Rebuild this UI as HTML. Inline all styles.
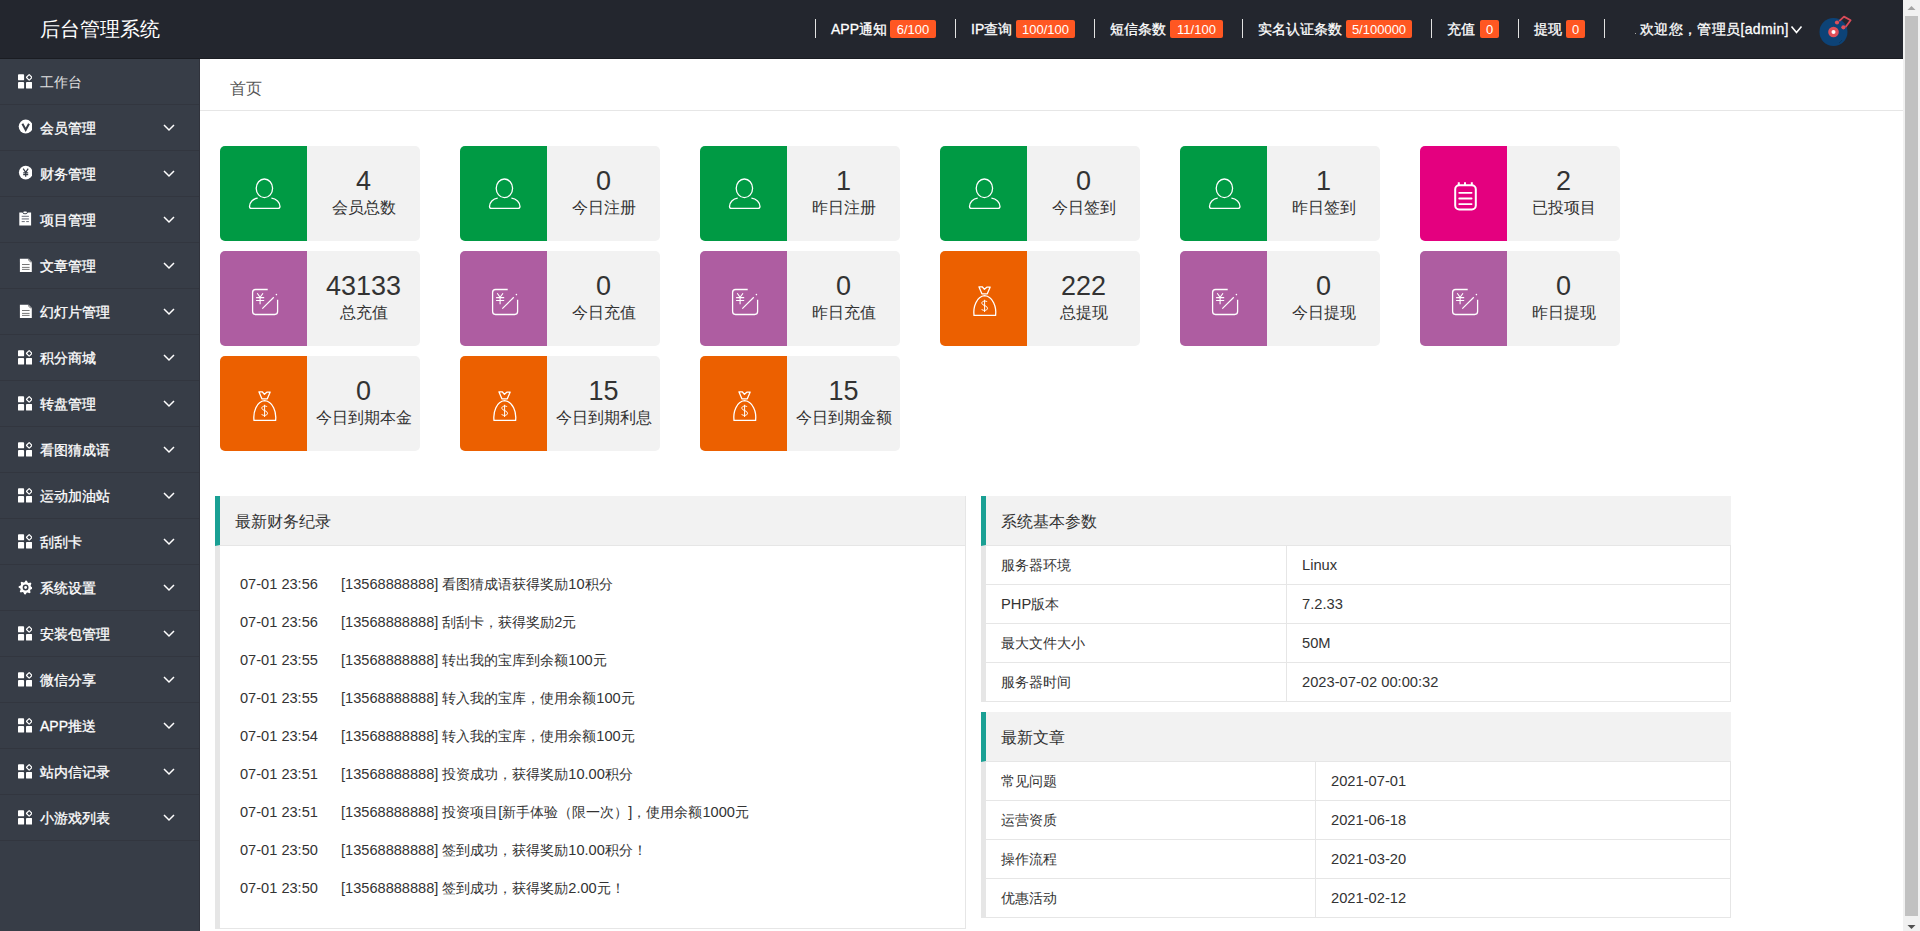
<!DOCTYPE html><html><head><meta charset="utf-8"><title>后台管理系统</title><style>
*{margin:0;padding:0;box-sizing:border-box}
html,body{width:1920px;height:931px;overflow:hidden;background:#fff;font-family:"Liberation Sans",sans-serif;color:#333}
.abs{position:absolute}
#hdr{position:absolute;left:0;top:0;width:1903px;height:59px;background:#23262e;border-bottom:1px solid #1a1c22}
#logo{position:absolute;left:40px;top:15px;font-size:20px;line-height:28px;color:#fff;white-space:nowrap}
.sep{position:absolute;top:19px;width:1px;height:19px;background:#e2e2e2}
.nt{position:absolute;top:19px;font-size:14px;line-height:20px;color:#fff;white-space:nowrap;-webkit-text-stroke:0.3px #fff}
.bd{position:absolute;top:20px;height:18px;line-height:19px;font-size:12px;color:#fff;background:#ff5722;border-radius:2px;text-align:center;white-space:nowrap}
#side{position:absolute;left:0;top:59px;width:200px;height:872px;background:#373d47;border-right:1px solid #30333c}
.it{position:absolute;left:0;width:199px;height:46px;border-bottom:1px solid #32363f}
.tx{position:absolute;left:40px;font-size:14px;line-height:20px;color:#fff;white-space:nowrap;-webkit-text-stroke:0.3px #fff}
.tx0{-webkit-text-stroke:0}
.si{position:absolute;left:16px}
.chev{position:absolute;left:163px}
#crumb{position:absolute;left:200px;top:59px;width:1703px;height:52px;border-bottom:1px solid #e6e6e6}
#crumb span{position:absolute;left:30px;top:19px;font-size:16px;line-height:22px;color:#555}
.card{position:absolute;width:200px;height:95px;background:#f2f2f2;border-radius:5px;overflow:hidden}
.ci{position:absolute;left:0;top:0;width:87px;height:95px}
.cn{position:absolute;left:87px;width:113px;text-align:center;top:18px;font-size:27px;line-height:34px;color:#333}
.cl{position:absolute;left:87px;width:113px;text-align:center;top:51px;font-size:16px;line-height:22px;color:#333;white-space:nowrap}
.q{position:absolute;height:50px;background:#f2f2f2;border-left:5px solid #1aa094;border-bottom:1px solid #e6e6e6}
.q span{position:absolute;left:15px;top:15px;font-size:16px;line-height:22px;color:#333;white-space:nowrap}
.tl{position:absolute;font-size:14px;line-height:20px;color:#333;white-space:nowrap}
.row{position:absolute;border-bottom:1px solid #e6e6e6}
.td{position:absolute;font-size:14px;line-height:20px;color:#333;white-space:nowrap}

.tl .L{font-size:14.6px}
.td .L{font-size:14.7px}
.nt .L{font-size:14px}
.bd{font-size:13px !important}
</style></head><body>
<div id="hdr"><div id="logo">后台管理系统</div>
<div class="sep" style="left:815px"></div><div class="nt" style="left:831px">APP通知</div><div class="bd" style="left:890px;width:46px">6/100</div>
<div class="sep" style="left:955px"></div><div class="nt" style="left:971px">IP查询</div><div class="bd" style="left:1016px;width:59px">100/100</div>
<div class="sep" style="left:1094px"></div><div class="nt" style="left:1110px">短信条数</div><div class="bd" style="left:1170px;width:53px">11/100</div>
<div class="sep" style="left:1242px"></div><div class="nt" style="left:1258px">实名认证条数</div><div class="bd" style="left:1346px;width:66px">5/100000</div>
<div class="sep" style="left:1431px"></div><div class="nt" style="left:1447px">充值</div><div class="bd" style="left:1480px;width:19px">0</div>
<div class="sep" style="left:1518px"></div><div class="nt" style="left:1534px">提现</div><div class="bd" style="left:1566px;width:19px">0</div>
<div class="sep" style="left:1604px"></div>
<div class="abs" style="left:1635px;top:33px;width:1px;height:1px;background:#aaa"></div>
<div class="nt" style="left:1640px;letter-spacing:0.35px">欢迎您，管理员[admin]</div>
<svg class="abs" style="left:1790px;top:25px" width="13" height="10" viewBox="0 0 13 10"><path d="M1.5 1.5 L6.5 7.5 L11.5 1.5" fill="none" stroke="#fff" stroke-width="1.6"/></svg>
<svg class="abs" style="left:1815px;top:12px" width="40" height="40" viewBox="0 0 40 40"><circle cx="18.5" cy="20" r="14" fill="#0d4377"/><circle cx="18.5" cy="20" r="5.3" fill="#e0505a"/><circle cx="18.5" cy="20" r="2" fill="#fff"/><path d="M27 28 A11 11 0 0 1 24 31" fill="none" stroke="#08335c" stroke-width="0.8"/><path d="M24.2 9.2 L29 4.6 L35.6 8.2 L30.6 15" fill="none" stroke="#d94b59" stroke-width="1.8" stroke-linejoin="round"/><circle cx="22" cy="10.5" r="2.1" fill="#e0505a"/><circle cx="28.4" cy="15.3" r="2.1" fill="#e0505a"/></svg>
</div>
<div id="side"></div>
<div class="it" style="top:59px"></div>
<svg class="si" style="top:73px" width="16" height="16" viewBox="0 0 16 16"><rect x="2" y="1.2" width="6.1" height="6.1" rx="0.9" fill="#fff"/><rect x="2" y="9.1" width="6.1" height="6.5" rx="0.9" fill="#fff"/><rect x="10" y="9.1" width="6.3" height="6.5" rx="0.9" fill="#fff"/><rect x="11.2" y="2.4" width="4" height="4" rx="0.5" transform="rotate(45 13.2 4.4)" fill="none" stroke="#fff" stroke-width="1.2"/></svg>
<div class="tx tx0" style="top:72px;color:#e0e0e0">工作台</div>
<div class="it" style="top:105px"></div>
<svg class="si" style="top:119px" width="16" height="16" viewBox="0 0 16 16"><circle cx="9.7" cy="7.6" r="7" fill="#fff"/><path d="M6.4 4.8 L9.7 10.8 L13 4.8" fill="none" stroke="#373d47" stroke-width="2"/></svg>
<div class="tx" style="top:118px;color:#fff">会员管理</div>
<svg class="chev" style="top:124px" width="12" height="8" viewBox="0 0 12 8"><path d="M1 1 L6 6 L11 1" fill="none" stroke="#fff" stroke-width="1.5"/></svg>
<div class="it" style="top:151px"></div>
<svg class="si" style="top:165px" width="16" height="16" viewBox="0 0 16 16"><circle cx="9.7" cy="7.6" r="6.8" fill="#fff"/><path d="M7.2 3.6 L9.7 7.4 L12.2 3.6 M9.7 7.4 V11.8 M7.2 7.8 H12.2 M7.2 9.6 H12.2" fill="none" stroke="#373d47" stroke-width="1.2"/></svg>
<div class="tx" style="top:164px;color:#fff">财务管理</div>
<svg class="chev" style="top:170px" width="12" height="8" viewBox="0 0 12 8"><path d="M1 1 L6 6 L11 1" fill="none" stroke="#fff" stroke-width="1.5"/></svg>
<div class="it" style="top:197px"></div>
<svg class="si" style="top:211px" width="16" height="16" viewBox="0 0 16 16"><path d="M3.3 1.4 H6.4 Q7.2 3.3 9.1 3.3 Q11 3.3 11.8 1.4 H15.1 V14.6 H3.3 Z" fill="#fff"/><rect x="7.3" y="0.6" width="3.6" height="1.6" rx="0.8" fill="#fff"/><path d="M5.7 5.3 H12.9 M10.8 7.9" stroke="#6b6f78" stroke-width="1"/><path d="M5.7 7.9 H12.9" stroke="#9a9da4" stroke-width="1.6"/><path d="M5.7 10.6 H8.8 M10.2 10.6 H12.9" stroke="#6b6f78" stroke-width="1"/></svg>
<div class="tx" style="top:210px;color:#fff">项目管理</div>
<svg class="chev" style="top:216px" width="12" height="8" viewBox="0 0 12 8"><path d="M1 1 L6 6 L11 1" fill="none" stroke="#fff" stroke-width="1.5"/></svg>
<div class="it" style="top:243px"></div>
<svg class="si" style="top:257px" width="16" height="16" viewBox="0 0 16 16"><path d="M3.9 1.7 H12.6 L15.8 5 V15.1 H3.9 Z" fill="#fff"/><path d="M12.3 2.2 Q13 4.6 15.3 5.2" fill="none" stroke="#777" stroke-width="1"/><path d="M6 7.5 H13.6 M6 10.4 H13.6 M6 12.4 H13.6" stroke="#777" stroke-width="1"/></svg>
<div class="tx" style="top:256px;color:#fff">文章管理</div>
<svg class="chev" style="top:262px" width="12" height="8" viewBox="0 0 12 8"><path d="M1 1 L6 6 L11 1" fill="none" stroke="#fff" stroke-width="1.5"/></svg>
<div class="it" style="top:289px"></div>
<svg class="si" style="top:303px" width="16" height="16" viewBox="0 0 16 16"><path d="M3.9 1.7 H12.6 L15.8 5 V15.1 H3.9 Z" fill="#fff"/><path d="M12.3 2.2 Q13 4.6 15.3 5.2" fill="none" stroke="#777" stroke-width="1"/><path d="M6 7.5 H13.6 M6 10.4 H13.6 M6 12.4 H13.6" stroke="#777" stroke-width="1"/></svg>
<div class="tx" style="top:302px;color:#fff">幻灯片管理</div>
<svg class="chev" style="top:308px" width="12" height="8" viewBox="0 0 12 8"><path d="M1 1 L6 6 L11 1" fill="none" stroke="#fff" stroke-width="1.5"/></svg>
<div class="it" style="top:335px"></div>
<svg class="si" style="top:349px" width="16" height="16" viewBox="0 0 16 16"><rect x="2" y="1.2" width="6.1" height="6.1" rx="0.9" fill="#fff"/><rect x="2" y="9.1" width="6.1" height="6.5" rx="0.9" fill="#fff"/><rect x="10" y="9.1" width="6.3" height="6.5" rx="0.9" fill="#fff"/><rect x="11.2" y="2.4" width="4" height="4" rx="0.5" transform="rotate(45 13.2 4.4)" fill="none" stroke="#fff" stroke-width="1.2"/></svg>
<div class="tx" style="top:348px;color:#fff">积分商城</div>
<svg class="chev" style="top:354px" width="12" height="8" viewBox="0 0 12 8"><path d="M1 1 L6 6 L11 1" fill="none" stroke="#fff" stroke-width="1.5"/></svg>
<div class="it" style="top:381px"></div>
<svg class="si" style="top:395px" width="16" height="16" viewBox="0 0 16 16"><rect x="2" y="1.2" width="6.1" height="6.1" rx="0.9" fill="#fff"/><rect x="2" y="9.1" width="6.1" height="6.5" rx="0.9" fill="#fff"/><rect x="10" y="9.1" width="6.3" height="6.5" rx="0.9" fill="#fff"/><rect x="11.2" y="2.4" width="4" height="4" rx="0.5" transform="rotate(45 13.2 4.4)" fill="none" stroke="#fff" stroke-width="1.2"/></svg>
<div class="tx" style="top:394px;color:#fff">转盘管理</div>
<svg class="chev" style="top:400px" width="12" height="8" viewBox="0 0 12 8"><path d="M1 1 L6 6 L11 1" fill="none" stroke="#fff" stroke-width="1.5"/></svg>
<div class="it" style="top:427px"></div>
<svg class="si" style="top:441px" width="16" height="16" viewBox="0 0 16 16"><rect x="2" y="1.2" width="6.1" height="6.1" rx="0.9" fill="#fff"/><rect x="2" y="9.1" width="6.1" height="6.5" rx="0.9" fill="#fff"/><rect x="10" y="9.1" width="6.3" height="6.5" rx="0.9" fill="#fff"/><rect x="11.2" y="2.4" width="4" height="4" rx="0.5" transform="rotate(45 13.2 4.4)" fill="none" stroke="#fff" stroke-width="1.2"/></svg>
<div class="tx" style="top:440px;color:#fff">看图猜成语</div>
<svg class="chev" style="top:446px" width="12" height="8" viewBox="0 0 12 8"><path d="M1 1 L6 6 L11 1" fill="none" stroke="#fff" stroke-width="1.5"/></svg>
<div class="it" style="top:473px"></div>
<svg class="si" style="top:487px" width="16" height="16" viewBox="0 0 16 16"><rect x="2" y="1.2" width="6.1" height="6.1" rx="0.9" fill="#fff"/><rect x="2" y="9.1" width="6.1" height="6.5" rx="0.9" fill="#fff"/><rect x="10" y="9.1" width="6.3" height="6.5" rx="0.9" fill="#fff"/><rect x="11.2" y="2.4" width="4" height="4" rx="0.5" transform="rotate(45 13.2 4.4)" fill="none" stroke="#fff" stroke-width="1.2"/></svg>
<div class="tx" style="top:486px;color:#fff">运动加油站</div>
<svg class="chev" style="top:492px" width="12" height="8" viewBox="0 0 12 8"><path d="M1 1 L6 6 L11 1" fill="none" stroke="#fff" stroke-width="1.5"/></svg>
<div class="it" style="top:519px"></div>
<svg class="si" style="top:533px" width="16" height="16" viewBox="0 0 16 16"><rect x="2" y="1.2" width="6.1" height="6.1" rx="0.9" fill="#fff"/><rect x="2" y="9.1" width="6.1" height="6.5" rx="0.9" fill="#fff"/><rect x="10" y="9.1" width="6.3" height="6.5" rx="0.9" fill="#fff"/><rect x="11.2" y="2.4" width="4" height="4" rx="0.5" transform="rotate(45 13.2 4.4)" fill="none" stroke="#fff" stroke-width="1.2"/></svg>
<div class="tx" style="top:532px;color:#fff">刮刮卡</div>
<svg class="chev" style="top:538px" width="12" height="8" viewBox="0 0 12 8"><path d="M1 1 L6 6 L11 1" fill="none" stroke="#fff" stroke-width="1.5"/></svg>
<div class="it" style="top:565px"></div>
<svg class="si" style="top:579px" width="16" height="16" viewBox="0 0 16 16"><polygon points="8.55,3.20 9.60,1.50 10.97,1.63 11.67,3.51 12.60,4.01 14.55,3.55 15.42,4.61 14.59,6.43 14.90,7.45 16.60,8.50 16.47,9.87 14.59,10.57 14.09,11.50 14.55,13.45 13.49,14.32 11.67,13.49 10.65,13.80 9.60,15.50 8.23,15.37 7.53,13.49 6.60,12.99 4.65,13.45 3.78,12.39 4.61,10.57 4.30,9.55 2.60,8.50 2.73,7.13 4.61,6.43 5.11,5.50 4.65,3.55 5.71,2.68 7.53,3.51" fill="#fff"/><circle cx="9.6" cy="8.5" r="2.2" fill="none" stroke="#373d47" stroke-width="1.5"/></svg>
<div class="tx" style="top:578px;color:#fff">系统设置</div>
<svg class="chev" style="top:584px" width="12" height="8" viewBox="0 0 12 8"><path d="M1 1 L6 6 L11 1" fill="none" stroke="#fff" stroke-width="1.5"/></svg>
<div class="it" style="top:611px"></div>
<svg class="si" style="top:625px" width="16" height="16" viewBox="0 0 16 16"><rect x="2" y="1.2" width="6.1" height="6.1" rx="0.9" fill="#fff"/><rect x="2" y="9.1" width="6.1" height="6.5" rx="0.9" fill="#fff"/><rect x="10" y="9.1" width="6.3" height="6.5" rx="0.9" fill="#fff"/><rect x="11.2" y="2.4" width="4" height="4" rx="0.5" transform="rotate(45 13.2 4.4)" fill="none" stroke="#fff" stroke-width="1.2"/></svg>
<div class="tx" style="top:624px;color:#fff">安装包管理</div>
<svg class="chev" style="top:630px" width="12" height="8" viewBox="0 0 12 8"><path d="M1 1 L6 6 L11 1" fill="none" stroke="#fff" stroke-width="1.5"/></svg>
<div class="it" style="top:657px"></div>
<svg class="si" style="top:671px" width="16" height="16" viewBox="0 0 16 16"><rect x="2" y="1.2" width="6.1" height="6.1" rx="0.9" fill="#fff"/><rect x="2" y="9.1" width="6.1" height="6.5" rx="0.9" fill="#fff"/><rect x="10" y="9.1" width="6.3" height="6.5" rx="0.9" fill="#fff"/><rect x="11.2" y="2.4" width="4" height="4" rx="0.5" transform="rotate(45 13.2 4.4)" fill="none" stroke="#fff" stroke-width="1.2"/></svg>
<div class="tx" style="top:670px;color:#fff">微信分享</div>
<svg class="chev" style="top:676px" width="12" height="8" viewBox="0 0 12 8"><path d="M1 1 L6 6 L11 1" fill="none" stroke="#fff" stroke-width="1.5"/></svg>
<div class="it" style="top:703px"></div>
<svg class="si" style="top:717px" width="16" height="16" viewBox="0 0 16 16"><rect x="2" y="1.2" width="6.1" height="6.1" rx="0.9" fill="#fff"/><rect x="2" y="9.1" width="6.1" height="6.5" rx="0.9" fill="#fff"/><rect x="10" y="9.1" width="6.3" height="6.5" rx="0.9" fill="#fff"/><rect x="11.2" y="2.4" width="4" height="4" rx="0.5" transform="rotate(45 13.2 4.4)" fill="none" stroke="#fff" stroke-width="1.2"/></svg>
<div class="tx" style="top:716px;color:#fff"><span class="L">APP</span>推送</div>
<svg class="chev" style="top:722px" width="12" height="8" viewBox="0 0 12 8"><path d="M1 1 L6 6 L11 1" fill="none" stroke="#fff" stroke-width="1.5"/></svg>
<div class="it" style="top:749px"></div>
<svg class="si" style="top:763px" width="16" height="16" viewBox="0 0 16 16"><rect x="2" y="1.2" width="6.1" height="6.1" rx="0.9" fill="#fff"/><rect x="2" y="9.1" width="6.1" height="6.5" rx="0.9" fill="#fff"/><rect x="10" y="9.1" width="6.3" height="6.5" rx="0.9" fill="#fff"/><rect x="11.2" y="2.4" width="4" height="4" rx="0.5" transform="rotate(45 13.2 4.4)" fill="none" stroke="#fff" stroke-width="1.2"/></svg>
<div class="tx" style="top:762px;color:#fff">站内信记录</div>
<svg class="chev" style="top:768px" width="12" height="8" viewBox="0 0 12 8"><path d="M1 1 L6 6 L11 1" fill="none" stroke="#fff" stroke-width="1.5"/></svg>
<div class="it" style="top:795px"></div>
<svg class="si" style="top:809px" width="16" height="16" viewBox="0 0 16 16"><rect x="2" y="1.2" width="6.1" height="6.1" rx="0.9" fill="#fff"/><rect x="2" y="9.1" width="6.1" height="6.5" rx="0.9" fill="#fff"/><rect x="10" y="9.1" width="6.3" height="6.5" rx="0.9" fill="#fff"/><rect x="11.2" y="2.4" width="4" height="4" rx="0.5" transform="rotate(45 13.2 4.4)" fill="none" stroke="#fff" stroke-width="1.2"/></svg>
<div class="tx" style="top:808px;color:#fff">小游戏列表</div>
<svg class="chev" style="top:814px" width="12" height="8" viewBox="0 0 12 8"><path d="M1 1 L6 6 L11 1" fill="none" stroke="#fff" stroke-width="1.5"/></svg>
<div id="crumb"><span>首页</span></div>
<div class="card" style="left:220px;top:146px"><div class="ci" style="background:#009a44"><svg class="abs" style="left:0;top:0" width="87" height="95" viewBox="0 0 87 95"><ellipse cx="44.4" cy="42.3" rx="8.2" ry="9.3" fill="none" stroke="#fff" stroke-width="1.3"/><path d="M37.7 52.2 C33 52.6 29.5 56.5 29.5 60.5 C29.5 61.8 30.3 62.4 31.5 62.4 H57.8 C59 62.4 60 61.8 60 60.5 C60 56.5 56.3 52.6 51.4 52.2" fill="none" stroke="#fff" stroke-width="1.3"/></svg></div><div class="cn">4</div><div class="cl">会员总数</div></div>
<div class="card" style="left:460px;top:146px"><div class="ci" style="background:#009a44"><svg class="abs" style="left:0;top:0" width="87" height="95" viewBox="0 0 87 95"><ellipse cx="44.4" cy="42.3" rx="8.2" ry="9.3" fill="none" stroke="#fff" stroke-width="1.3"/><path d="M37.7 52.2 C33 52.6 29.5 56.5 29.5 60.5 C29.5 61.8 30.3 62.4 31.5 62.4 H57.8 C59 62.4 60 61.8 60 60.5 C60 56.5 56.3 52.6 51.4 52.2" fill="none" stroke="#fff" stroke-width="1.3"/></svg></div><div class="cn">0</div><div class="cl">今日注册</div></div>
<div class="card" style="left:700px;top:146px"><div class="ci" style="background:#009a44"><svg class="abs" style="left:0;top:0" width="87" height="95" viewBox="0 0 87 95"><ellipse cx="44.4" cy="42.3" rx="8.2" ry="9.3" fill="none" stroke="#fff" stroke-width="1.3"/><path d="M37.7 52.2 C33 52.6 29.5 56.5 29.5 60.5 C29.5 61.8 30.3 62.4 31.5 62.4 H57.8 C59 62.4 60 61.8 60 60.5 C60 56.5 56.3 52.6 51.4 52.2" fill="none" stroke="#fff" stroke-width="1.3"/></svg></div><div class="cn">1</div><div class="cl">昨日注册</div></div>
<div class="card" style="left:940px;top:146px"><div class="ci" style="background:#009a44"><svg class="abs" style="left:0;top:0" width="87" height="95" viewBox="0 0 87 95"><ellipse cx="44.4" cy="42.3" rx="8.2" ry="9.3" fill="none" stroke="#fff" stroke-width="1.3"/><path d="M37.7 52.2 C33 52.6 29.5 56.5 29.5 60.5 C29.5 61.8 30.3 62.4 31.5 62.4 H57.8 C59 62.4 60 61.8 60 60.5 C60 56.5 56.3 52.6 51.4 52.2" fill="none" stroke="#fff" stroke-width="1.3"/></svg></div><div class="cn">0</div><div class="cl">今日签到</div></div>
<div class="card" style="left:1180px;top:146px"><div class="ci" style="background:#009a44"><svg class="abs" style="left:0;top:0" width="87" height="95" viewBox="0 0 87 95"><ellipse cx="44.4" cy="42.3" rx="8.2" ry="9.3" fill="none" stroke="#fff" stroke-width="1.3"/><path d="M37.7 52.2 C33 52.6 29.5 56.5 29.5 60.5 C29.5 61.8 30.3 62.4 31.5 62.4 H57.8 C59 62.4 60 61.8 60 60.5 C60 56.5 56.3 52.6 51.4 52.2" fill="none" stroke="#fff" stroke-width="1.3"/></svg></div><div class="cn">1</div><div class="cl">昨日签到</div></div>
<div class="card" style="left:1420px;top:146px"><div class="ci" style="background:#e4007f"><svg class="abs" style="left:0;top:0" width="87" height="95" viewBox="0 0 87 95"><rect x="35.2" y="39.2" width="20.6" height="24.3" rx="4" fill="none" stroke="#fff" stroke-width="2"/><path d="M38.8 36.2 V39.5 M45 36.2 V39.5 M51.8 36.2 V39.5" stroke="#fff" stroke-width="2"/><path d="M39.2 46.8 H51.6 M39.2 52.5 H51.6 M39.2 58.1 H51.6" stroke="#fff" stroke-width="1.8" stroke-linecap="round"/></svg></div><div class="cn">2</div><div class="cl">已投项目</div></div>
<div class="card" style="left:220px;top:251px"><div class="ci" style="background:#ae5da1"><svg class="abs" style="left:0;top:0" width="87" height="95" viewBox="0 0 87 95"><path d="M47.7 38.5 H35.5 Q32.6 38.5 32.6 41.4 V60.6 Q32.6 63.5 35.5 63.5 H54.7 Q57.6 63.5 57.6 60.6 V48.7" fill="none" stroke="#fff" stroke-width="1.3"/><path d="M42.3 57.6 L53.8 46.3" fill="none" stroke="#fff" stroke-width="1.2"/><circle cx="56.4" cy="43.6" r="0.8" fill="#fff"/><path d="M37.2 42.3 L40.1 46.3 L43 42.3 M40.1 46.3 V53.3 M36.1 46.6 H44.2 M36.1 49.5 H44.2" fill="none" stroke="#fff" stroke-width="1.1"/></svg></div><div class="cn">43133</div><div class="cl">总充值</div></div>
<div class="card" style="left:460px;top:251px"><div class="ci" style="background:#ae5da1"><svg class="abs" style="left:0;top:0" width="87" height="95" viewBox="0 0 87 95"><path d="M47.7 38.5 H35.5 Q32.6 38.5 32.6 41.4 V60.6 Q32.6 63.5 35.5 63.5 H54.7 Q57.6 63.5 57.6 60.6 V48.7" fill="none" stroke="#fff" stroke-width="1.3"/><path d="M42.3 57.6 L53.8 46.3" fill="none" stroke="#fff" stroke-width="1.2"/><circle cx="56.4" cy="43.6" r="0.8" fill="#fff"/><path d="M37.2 42.3 L40.1 46.3 L43 42.3 M40.1 46.3 V53.3 M36.1 46.6 H44.2 M36.1 49.5 H44.2" fill="none" stroke="#fff" stroke-width="1.1"/></svg></div><div class="cn">0</div><div class="cl">今日充值</div></div>
<div class="card" style="left:700px;top:251px"><div class="ci" style="background:#ae5da1"><svg class="abs" style="left:0;top:0" width="87" height="95" viewBox="0 0 87 95"><path d="M47.7 38.5 H35.5 Q32.6 38.5 32.6 41.4 V60.6 Q32.6 63.5 35.5 63.5 H54.7 Q57.6 63.5 57.6 60.6 V48.7" fill="none" stroke="#fff" stroke-width="1.3"/><path d="M42.3 57.6 L53.8 46.3" fill="none" stroke="#fff" stroke-width="1.2"/><circle cx="56.4" cy="43.6" r="0.8" fill="#fff"/><path d="M37.2 42.3 L40.1 46.3 L43 42.3 M40.1 46.3 V53.3 M36.1 46.6 H44.2 M36.1 49.5 H44.2" fill="none" stroke="#fff" stroke-width="1.1"/></svg></div><div class="cn">0</div><div class="cl">昨日充值</div></div>
<div class="card" style="left:940px;top:251px"><div class="ci" style="background:#ec6000"><svg class="abs" style="left:0;top:0" width="87" height="95" viewBox="0 0 87 95"><path d="M34 64.3 H55.6 C56.6 56 53 45.5 44.6 44.7 C36.5 45.5 33 56 34 64.3 Z" fill="none" stroke="#fff" stroke-width="1.3"/><path d="M38.9 35.8 L41.9 42.8 H47.3 L50.1 36.2 H46.8 L44.4 38.3 L42.2 35.8 Z" fill="none" stroke="#fff" stroke-width="1.3" stroke-linejoin="round"/><path d="M47.3 51 C46.6 49.6 41.7 49.6 41.8 52.2 C41.9 54.8 47.4 54.2 47.5 57.2 C47.6 60 42.3 59.9 41.5 58.1 M44.6 48.8 V61" fill="none" stroke="#fff" stroke-width="1"/></svg></div><div class="cn">222</div><div class="cl">总提现</div></div>
<div class="card" style="left:1180px;top:251px"><div class="ci" style="background:#ae5da1"><svg class="abs" style="left:0;top:0" width="87" height="95" viewBox="0 0 87 95"><path d="M47.7 38.5 H35.5 Q32.6 38.5 32.6 41.4 V60.6 Q32.6 63.5 35.5 63.5 H54.7 Q57.6 63.5 57.6 60.6 V48.7" fill="none" stroke="#fff" stroke-width="1.3"/><path d="M42.3 57.6 L53.8 46.3" fill="none" stroke="#fff" stroke-width="1.2"/><circle cx="56.4" cy="43.6" r="0.8" fill="#fff"/><path d="M37.2 42.3 L40.1 46.3 L43 42.3 M40.1 46.3 V53.3 M36.1 46.6 H44.2 M36.1 49.5 H44.2" fill="none" stroke="#fff" stroke-width="1.1"/></svg></div><div class="cn">0</div><div class="cl">今日提现</div></div>
<div class="card" style="left:1420px;top:251px"><div class="ci" style="background:#ae5da1"><svg class="abs" style="left:0;top:0" width="87" height="95" viewBox="0 0 87 95"><path d="M47.7 38.5 H35.5 Q32.6 38.5 32.6 41.4 V60.6 Q32.6 63.5 35.5 63.5 H54.7 Q57.6 63.5 57.6 60.6 V48.7" fill="none" stroke="#fff" stroke-width="1.3"/><path d="M42.3 57.6 L53.8 46.3" fill="none" stroke="#fff" stroke-width="1.2"/><circle cx="56.4" cy="43.6" r="0.8" fill="#fff"/><path d="M37.2 42.3 L40.1 46.3 L43 42.3 M40.1 46.3 V53.3 M36.1 46.6 H44.2 M36.1 49.5 H44.2" fill="none" stroke="#fff" stroke-width="1.1"/></svg></div><div class="cn">0</div><div class="cl">昨日提现</div></div>
<div class="card" style="left:220px;top:356px"><div class="ci" style="background:#ec6000"><svg class="abs" style="left:0;top:0" width="87" height="95" viewBox="0 0 87 95"><path d="M34 64.3 H55.6 C56.6 56 53 45.5 44.6 44.7 C36.5 45.5 33 56 34 64.3 Z" fill="none" stroke="#fff" stroke-width="1.3"/><path d="M38.9 35.8 L41.9 42.8 H47.3 L50.1 36.2 H46.8 L44.4 38.3 L42.2 35.8 Z" fill="none" stroke="#fff" stroke-width="1.3" stroke-linejoin="round"/><path d="M47.3 51 C46.6 49.6 41.7 49.6 41.8 52.2 C41.9 54.8 47.4 54.2 47.5 57.2 C47.6 60 42.3 59.9 41.5 58.1 M44.6 48.8 V61" fill="none" stroke="#fff" stroke-width="1"/></svg></div><div class="cn">0</div><div class="cl">今日到期本金</div></div>
<div class="card" style="left:460px;top:356px"><div class="ci" style="background:#ec6000"><svg class="abs" style="left:0;top:0" width="87" height="95" viewBox="0 0 87 95"><path d="M34 64.3 H55.6 C56.6 56 53 45.5 44.6 44.7 C36.5 45.5 33 56 34 64.3 Z" fill="none" stroke="#fff" stroke-width="1.3"/><path d="M38.9 35.8 L41.9 42.8 H47.3 L50.1 36.2 H46.8 L44.4 38.3 L42.2 35.8 Z" fill="none" stroke="#fff" stroke-width="1.3" stroke-linejoin="round"/><path d="M47.3 51 C46.6 49.6 41.7 49.6 41.8 52.2 C41.9 54.8 47.4 54.2 47.5 57.2 C47.6 60 42.3 59.9 41.5 58.1 M44.6 48.8 V61" fill="none" stroke="#fff" stroke-width="1"/></svg></div><div class="cn">15</div><div class="cl">今日到期利息</div></div>
<div class="card" style="left:700px;top:356px"><div class="ci" style="background:#ec6000"><svg class="abs" style="left:0;top:0" width="87" height="95" viewBox="0 0 87 95"><path d="M34 64.3 H55.6 C56.6 56 53 45.5 44.6 44.7 C36.5 45.5 33 56 34 64.3 Z" fill="none" stroke="#fff" stroke-width="1.3"/><path d="M38.9 35.8 L41.9 42.8 H47.3 L50.1 36.2 H46.8 L44.4 38.3 L42.2 35.8 Z" fill="none" stroke="#fff" stroke-width="1.3" stroke-linejoin="round"/><path d="M47.3 51 C46.6 49.6 41.7 49.6 41.8 52.2 C41.9 54.8 47.4 54.2 47.5 57.2 C47.6 60 42.3 59.9 41.5 58.1 M44.6 48.8 V61" fill="none" stroke="#fff" stroke-width="1"/></svg></div><div class="cn">15</div><div class="cl">今日到期金额</div></div>
<div class="q" style="left:215px;top:496px;width:751px;border-right:1px solid #e6e6e6"><span>最新财务纪录</span></div>
<div class="abs" style="left:215px;top:546px;width:751px;height:383px;border-left:5px solid #e6e6e6;border-right:1px solid #e6e6e6;border-bottom:1px solid #e6e6e6"></div>
<div class="tl" style="left:240px;top:574px"><span class="L">07-01 23:56</span></div><div class="tl" style="left:341px;top:574px"><span class="L">[13568888888]</span> 看图猜成语获得奖励<span class="L">10</span>积分</div>
<div class="tl" style="left:240px;top:612px"><span class="L">07-01 23:56</span></div><div class="tl" style="left:341px;top:612px"><span class="L">[13568888888]</span> 刮刮卡，获得奖励<span class="L">2</span>元</div>
<div class="tl" style="left:240px;top:650px"><span class="L">07-01 23:55</span></div><div class="tl" style="left:341px;top:650px"><span class="L">[13568888888]</span> 转出我的宝库到余额<span class="L">100</span>元</div>
<div class="tl" style="left:240px;top:688px"><span class="L">07-01 23:55</span></div><div class="tl" style="left:341px;top:688px"><span class="L">[13568888888]</span> 转入我的宝库，使用余额<span class="L">100</span>元</div>
<div class="tl" style="left:240px;top:726px"><span class="L">07-01 23:54</span></div><div class="tl" style="left:341px;top:726px"><span class="L">[13568888888]</span> 转入我的宝库，使用余额<span class="L">100</span>元</div>
<div class="tl" style="left:240px;top:764px"><span class="L">07-01 23:51</span></div><div class="tl" style="left:341px;top:764px"><span class="L">[13568888888]</span> 投资成功，获得奖励<span class="L">10.00</span>积分</div>
<div class="tl" style="left:240px;top:802px"><span class="L">07-01 23:51</span></div><div class="tl" style="left:341px;top:802px"><span class="L">[13568888888]</span> 投资项目<span class="L">[</span>新手体验（限一次）<span class="L">]</span>，使用余额<span class="L">1000</span>元</div>
<div class="tl" style="left:240px;top:840px"><span class="L">07-01 23:50</span></div><div class="tl" style="left:341px;top:840px"><span class="L">[13568888888]</span> 签到成功，获得奖励<span class="L">10.00</span>积分！</div>
<div class="tl" style="left:240px;top:878px"><span class="L">07-01 23:50</span></div><div class="tl" style="left:341px;top:878px"><span class="L">[13568888888]</span> 签到成功，获得奖励<span class="L">2.00</span>元！</div>
<div class="q" style="left:981px;top:496px;width:750px"><span>系统基本参数</span></div>
<div class="abs" style="left:981px;top:546px;width:750px;height:156px;border-left:5px solid #e6e6e6;border-right:1px solid #e6e6e6"></div>
<div class="row" style="left:986px;top:546px;width:745px;height:39px"></div>
<div class="td" style="left:1001px;top:555px">服务器环境</div><div class="td" style="left:1302px;top:555px"><span class="L">Linux</span></div>
<div class="row" style="left:986px;top:585px;width:745px;height:39px"></div>
<div class="td" style="left:1001px;top:594px"><span class="L">PHP</span>版本</div><div class="td" style="left:1302px;top:594px"><span class="L">7.2.33</span></div>
<div class="row" style="left:986px;top:624px;width:745px;height:39px"></div>
<div class="td" style="left:1001px;top:633px">最大文件大小</div><div class="td" style="left:1302px;top:633px"><span class="L">50M</span></div>
<div class="row" style="left:986px;top:663px;width:745px;height:39px"></div>
<div class="td" style="left:1001px;top:672px">服务器时间</div><div class="td" style="left:1302px;top:672px"><span class="L">2023-07-02 00:00:32</span></div>
<div class="abs" style="left:1286px;top:546px;width:1px;height:156px;background:#e6e6e6"></div>
<div class="q" style="left:981px;top:712px;width:750px"><span>最新文章</span></div>
<div class="abs" style="left:981px;top:762px;width:750px;height:156px;border-left:5px solid #e6e6e6;border-right:1px solid #e6e6e6"></div>
<div class="row" style="left:986px;top:762px;width:745px;height:39px"></div>
<div class="td" style="left:1001px;top:771px">常见问题</div><div class="td" style="left:1331px;top:771px"><span class="L">2021-07-01</span></div>
<div class="row" style="left:986px;top:801px;width:745px;height:39px"></div>
<div class="td" style="left:1001px;top:810px">运营资质</div><div class="td" style="left:1331px;top:810px"><span class="L">2021-06-18</span></div>
<div class="row" style="left:986px;top:840px;width:745px;height:39px"></div>
<div class="td" style="left:1001px;top:849px">操作流程</div><div class="td" style="left:1331px;top:849px"><span class="L">2021-03-20</span></div>
<div class="row" style="left:986px;top:879px;width:745px;height:39px"></div>
<div class="td" style="left:1001px;top:888px">优惠活动</div><div class="td" style="left:1331px;top:888px"><span class="L">2021-02-12</span></div>
<div class="abs" style="left:1315px;top:762px;width:1px;height:156px;background:#e6e6e6"></div>
<div class="abs" style="left:1903px;top:0;width:17px;height:931px;background:#f1f1f1"></div>
<div class="abs" style="left:1905px;top:16px;width:13px;height:900px;background:#c1c1c1"></div>
<svg class="abs" style="left:1903px;top:0" width="17" height="17" viewBox="0 0 17 17"><path d="M4.5 10 L8.5 6 L12.5 10 Z" fill="#a3a3a3"/></svg>
<svg class="abs" style="left:1903px;top:914px" width="17" height="17" viewBox="0 0 17 17"><path d="M4.5 11 L8.5 15 L12.5 11 Z" fill="#505050"/></svg>
</body></html>
